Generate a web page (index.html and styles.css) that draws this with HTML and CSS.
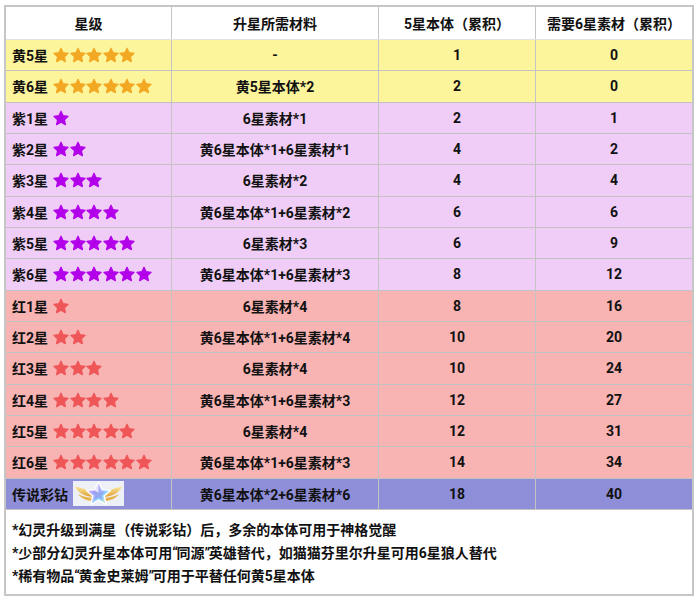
FILE: index.html
```html
<!DOCTYPE html>
<html lang="zh-CN">
<head>
<meta charset="utf-8">
<link rel="stylesheet" href="styles.css">
</head>
<body>
<svg class="defs" width="0" height="0" aria-hidden="true">
  <defs>
    <symbol id="star" viewBox="0 0 16 16">
      <polygon points="8,1.2 10.1,5.7 15.1,6.3 11.4,9.7 12.4,14.6 8,12.2 3.6,14.6 4.6,9.7 0.9,6.3 5.9,5.7" stroke-linejoin="round" stroke-width="1.2"/>
    </symbol>
    <linearGradient id="rb" x1="0" y1="0" x2="1" y2="1">
      <stop offset="0" stop-color="#ffc8ee"/>
      <stop offset="0.35" stop-color="#b9a8ff"/>
      <stop offset="0.65" stop-color="#8fd8ff"/>
      <stop offset="1" stop-color="#ffe9a8"/>
    </linearGradient>
    <linearGradient id="gw" x1="0" y1="0" x2="0" y2="1">
      <stop offset="0" stop-color="#ffeaa0"/>
      <stop offset="1" stop-color="#dea236"/>
    </linearGradient>
  </defs>
</svg>
<div class="board">
  <div class="row head">
    <div class="cell">星级</div>
    <div class="cell">升星所需材料</div>
    <div class="cell">5星本体（累积）</div>
    <div class="cell">需要6星素材（累积）</div>
  </div>

  <div class="row yellow">
    <div class="cell name">黄5星<span class="stars gold"><svg><use href="#star"/></svg><svg><use href="#star"/></svg><svg><use href="#star"/></svg><svg><use href="#star"/></svg><svg><use href="#star"/></svg></span></div>
    <div class="cell">-</div><div class="cell">1</div><div class="cell">0</div>
  </div>
  <div class="row yellow">
    <div class="cell name">黄6星<span class="stars gold"><svg><use href="#star"/></svg><svg><use href="#star"/></svg><svg><use href="#star"/></svg><svg><use href="#star"/></svg><svg><use href="#star"/></svg><svg><use href="#star"/></svg></span></div>
    <div class="cell">黄5星本体*2</div><div class="cell">2</div><div class="cell">0</div>
  </div>

  <div class="row purple">
    <div class="cell name">紫1星<span class="stars violet"><svg><use href="#star"/></svg></span></div>
    <div class="cell">6星素材*1</div><div class="cell">2</div><div class="cell">1</div>
  </div>
  <div class="row purple">
    <div class="cell name">紫2星<span class="stars violet"><svg><use href="#star"/></svg><svg><use href="#star"/></svg></span></div>
    <div class="cell">黄6星本体*1+6星素材*1</div><div class="cell">4</div><div class="cell">2</div>
  </div>
  <div class="row purple">
    <div class="cell name">紫3星<span class="stars violet"><svg><use href="#star"/></svg><svg><use href="#star"/></svg><svg><use href="#star"/></svg></span></div>
    <div class="cell">6星素材*2</div><div class="cell">4</div><div class="cell">4</div>
  </div>
  <div class="row purple">
    <div class="cell name">紫4星<span class="stars violet"><svg><use href="#star"/></svg><svg><use href="#star"/></svg><svg><use href="#star"/></svg><svg><use href="#star"/></svg></span></div>
    <div class="cell">黄6星本体*1+6星素材*2</div><div class="cell">6</div><div class="cell">6</div>
  </div>
  <div class="row purple">
    <div class="cell name">紫5星<span class="stars violet"><svg><use href="#star"/></svg><svg><use href="#star"/></svg><svg><use href="#star"/></svg><svg><use href="#star"/></svg><svg><use href="#star"/></svg></span></div>
    <div class="cell">6星素材*3</div><div class="cell">6</div><div class="cell">9</div>
  </div>
  <div class="row purple">
    <div class="cell name">紫6星<span class="stars violet"><svg><use href="#star"/></svg><svg><use href="#star"/></svg><svg><use href="#star"/></svg><svg><use href="#star"/></svg><svg><use href="#star"/></svg><svg><use href="#star"/></svg></span></div>
    <div class="cell">黄6星本体*1+6星素材*3</div><div class="cell">8</div><div class="cell">12</div>
  </div>

  <div class="row red">
    <div class="cell name">红1星<span class="stars rose"><svg><use href="#star"/></svg></span></div>
    <div class="cell">6星素材*4</div><div class="cell">8</div><div class="cell">16</div>
  </div>
  <div class="row red">
    <div class="cell name">红2星<span class="stars rose"><svg><use href="#star"/></svg><svg><use href="#star"/></svg></span></div>
    <div class="cell">黄6星本体*1+6星素材*4</div><div class="cell">10</div><div class="cell">20</div>
  </div>
  <div class="row red">
    <div class="cell name">红3星<span class="stars rose"><svg><use href="#star"/></svg><svg><use href="#star"/></svg><svg><use href="#star"/></svg></span></div>
    <div class="cell">6星素材*4</div><div class="cell">10</div><div class="cell">24</div>
  </div>
  <div class="row red">
    <div class="cell name">红4星<span class="stars rose"><svg><use href="#star"/></svg><svg><use href="#star"/></svg><svg><use href="#star"/></svg><svg><use href="#star"/></svg></span></div>
    <div class="cell">黄6星本体*1+6星素材*3</div><div class="cell">12</div><div class="cell">27</div>
  </div>
  <div class="row red">
    <div class="cell name">红5星<span class="stars rose"><svg><use href="#star"/></svg><svg><use href="#star"/></svg><svg><use href="#star"/></svg><svg><use href="#star"/></svg><svg><use href="#star"/></svg></span></div>
    <div class="cell">6星素材*4</div><div class="cell">12</div><div class="cell">31</div>
  </div>
  <div class="row red">
    <div class="cell name">红6星<span class="stars rose"><svg><use href="#star"/></svg><svg><use href="#star"/></svg><svg><use href="#star"/></svg><svg><use href="#star"/></svg><svg><use href="#star"/></svg><svg><use href="#star"/></svg></span></div>
    <div class="cell">黄6星本体*1+6星素材*3</div><div class="cell">14</div><div class="cell">34</div>
  </div>

  <div class="row blue">
    <div class="cell name">传说彩钻<svg class="badge" viewBox="0 0 51 25">
        <rect width="51" height="25" fill="#eef0f7"/>
        <path d="M20 12 C13 8 7 7 2 5 C4 11 10 15 20 16 Z" fill="url(#gw)"/>
        <path d="M19 17 C13 16 8 15 5 13 C8 17 13 20 20 20 Z" fill="#e6b24a"/>
        <path d="M31 12 C38 8 44 7 49 5 C47 11 41 15 31 16 Z" fill="url(#gw)"/>
        <path d="M32 17 C38 16 43 15 46 13 C43 17 38 20 31 20 Z" fill="#e6b24a"/>
        <polygon points="25.5,1 29.2,8.6 37.5,9.4 31.2,15 33.2,23.5 25.5,19 17.8,23.5 19.8,15 13.5,9.4 21.8,8.6" fill="url(#rb)" stroke="#ffffff" stroke-width="1.3" stroke-linejoin="round"/>
        <polygon points="25.5,6 27.5,10.6 32.2,11.1 28.7,14.3 29.8,19 25.5,16.6 21.2,19 22.3,14.3 18.8,11.1 23.5,10.6" fill="#8f95e6" opacity="0.6"/>
        <path d="M22 9.5 L25.5 3 L25.5 12 Z" fill="#ffffff" opacity="0.7"/>
      </svg></div>
    <div class="cell">黄6星本体*2+6星素材*6</div><div class="cell">18</div><div class="cell">40</div>
  </div>

  <div class="notes">
    <p>*幻灵升级到满星（传说彩钻）后，多余的本体可用于神格觉醒</p>
    <p>*少部分幻灵升星本体可用<span class="q">“</span>同源<span class="q">”</span>英雄替代，如猫猫芬里尔升星可用6星狼人替代</p>
    <p>*稀有物品<span class="q">“</span>黄金史莱姆<span class="q">”</span>可用于平替任何黄5星本体</p>
  </div>
</div>
</body>
</html>
```

FILE: styles.css
```css
html, body {
  margin: 0;
  padding: 0;
  background: #ffffff;
}

body {
  font-family: Roboto, "Noto Sans CJK SC", sans-serif;
  font-weight: 700;
  font-size: 14px;
  color: #111111;
}

.defs {
  position: absolute;
  width: 0;
  height: 0;
  overflow: hidden;
}

.board {
  margin: 5px 0 0 4px;
  width: 686px;
  border: 2px solid #c6c6c6;
  background: #ffffff;
}

.row {
  display: grid;
  grid-template-columns: 166px 207px 157px 156px;
  height: 31.33px;
  box-sizing: border-box;
  border-bottom: 1px solid #c2c2c2;
}

.row.head {
  height: 33px;
  background: #ffffff;
  border-bottom: 1px solid #e2e2e2;
}

.cell {
  display: flex;
  align-items: center;
  justify-content: center;
  border-right: 1px solid #c4c4c4;
  white-space: nowrap;
}

.cell:last-child {
  border-right: none;
}

.cell.name {
  justify-content: flex-start;
  padding-left: 6px;
}

.yellow { background: #fdf59c; }
.purple { background: #efcdf6; }
.red    { background: #f8b3b3; }
.blue   { background: #8f8fd9; }

.stars {
  display: inline-flex;
  align-items: center;
  gap: 0.5px;
  margin-left: 5px;
}

.stars svg {
  width: 16px;
  height: 16px;
  display: block;
}

.gold svg   { fill: #f2a823; stroke: #f2a823; }
.violet svg { fill: #b300ea; stroke: #b300ea; }
.rose svg   { fill: #ef5658; stroke: #ef5658; }

.badge {
  width: 51px;
  height: 25px;
  margin-left: 5px;
  display: block;
}

.notes {
  padding: 9px 0 6px 6px;
}

.notes p {
  margin: 0;
  line-height: 23px;
  white-space: nowrap;
}

.q {
  letter-spacing: -1.5px;
}
```
